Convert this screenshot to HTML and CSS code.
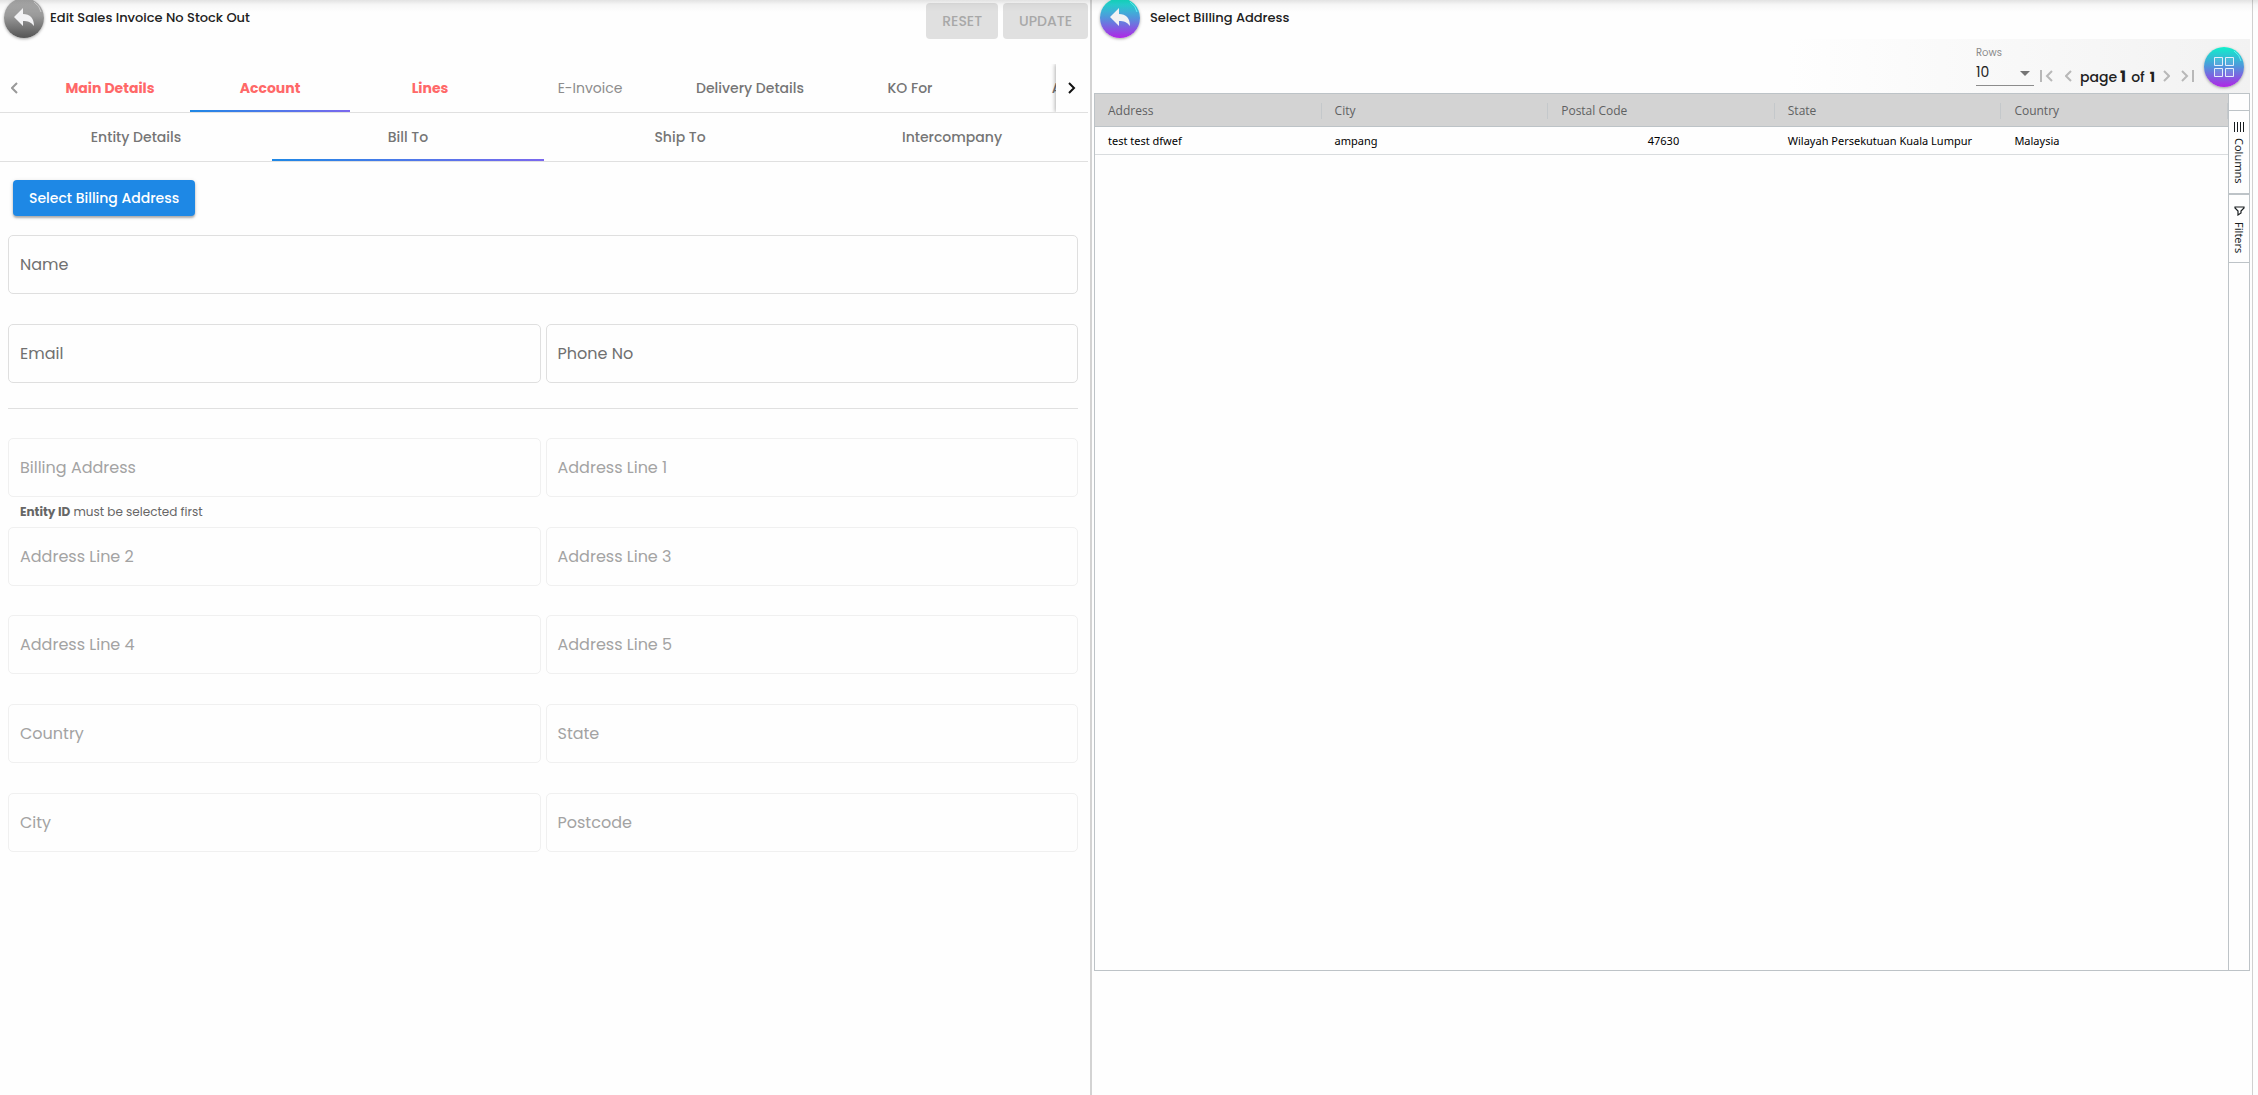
FILE: index.html
```html
<!DOCTYPE html>
<html lang="en">
<head>
<meta charset="utf-8">
<meta name="viewport" content="width=device-width, initial-scale=1">
<title>Edit Sales Invoice No Stock Out</title>
<link rel="stylesheet" href="styles.css">
</head>
<body>
<div class="workspace">
  <main class="pane pane-edit">
    <header class="pane-header">
      <button class="round round-grey" type="button" aria-label="Back">
        <svg width="40" height="40" viewBox="0 0 40 40"><path d="M19 10v6c7 0 11 4 11 12-3-4-6-5-11-5v5l-9-9z" fill="#f2f2f4"/><path d="M30 4q6 4 7 10" fill="none" stroke="#fff" stroke-opacity=".45"/></svg>
      </button>
      <h1 class="pane-title">Edit Sales Invoice No Stock Out</h1>
      <div class="actions">
        <button class="btn btn-disabled" type="button" disabled>RESET</button>
        <button class="btn btn-disabled" type="button" disabled>UPDATE</button>
      </div>
    </header>

    <nav class="tabs" aria-label="Invoice sections">
      <button class="pager pager-prev" type="button" aria-label="Previous tabs"><svg width="8" height="12" viewBox="0 0 8 12"><path d="M6 1L1 6l5 5" fill="none" stroke="#999" stroke-width="2"/></svg></button>
      <div class="tab-strip">
        <button class="tab tab-error" type="button">Main Details</button>
        <button class="tab tab-error tab-active" type="button">Account</button>
        <button class="tab tab-error" type="button">Lines</button>
        <button class="tab tab-light" type="button">E-Invoice</button>
        <button class="tab" type="button">Delivery Details</button>
        <button class="tab" type="button">KO For</button>
        <button class="tab" type="button">ARAP</button>
      </div>
      <button class="pager pager-next" type="button" aria-label="Next tabs"><svg width="8" height="12" viewBox="0 0 8 12"><path d="M1 1l5 5-5 5" fill="none" stroke="#111" stroke-width="2"/></svg></button>
    </nav>

    <nav class="tabs subtabs" aria-label="Account sections">
      <button class="tab" type="button">Entity Details</button>
      <button class="tab tab-active" type="button">Bill To</button>
      <button class="tab" type="button">Ship To</button>
      <button class="tab" type="button">Intercompany</button>
    </nav>

    <form class="bill-form">
      <button class="btn btn-primary" type="button">Select Billing Address</button>
      <div class="fields">
        <div class="field field-wide"><input id="name" type="text"><label for="name">Name</label></div>
        <div class="field"><input id="email" type="email"><label for="email">Email</label></div>
        <div class="field"><input id="phone" type="tel"><label for="phone">Phone No</label></div>
      </div>
      <hr class="rule">
      <div class="fields fields-address">
        <div class="field"><input id="billing" type="text" disabled><label for="billing">Billing Address</label></div>
        <div class="field"><input id="line1" type="text" disabled><label for="line1">Address Line 1</label></div>
        <p class="hint"><strong>Entity ID</strong> must be selected first</p>
        <div class="field"><input id="line2" type="text" disabled><label for="line2">Address Line 2</label></div>
        <div class="field"><input id="line3" type="text" disabled><label for="line3">Address Line 3</label></div>
      </div>
      <div class="fields fields-more">
        <div class="field"><input id="line4" type="text" disabled><label for="line4">Address Line 4</label></div>
        <div class="field"><input id="line5" type="text" disabled><label for="line5">Address Line 5</label></div>
        <div class="field"><input id="country" type="text" disabled><label for="country">Country</label></div>
        <div class="field"><input id="state" type="text" disabled><label for="state">State</label></div>
        <div class="field"><input id="city" type="text" disabled><label for="city">City</label></div>
        <div class="field"><input id="postcode" type="text" disabled><label for="postcode">Postcode</label></div>
      </div>
    </form>
  </main>

  <aside class="pane pane-select">
    <header class="pane-header">
      <button class="round round-color" type="button" aria-label="Back">
        <svg width="40" height="40" viewBox="0 0 40 40"><path d="M19 10v6c7 0 11 4 11 12-3-4-6-5-11-5v5l-9-9z" fill="#f2f2f4"/><path d="M30 4q6 4 7 10" fill="none" stroke="#7ff" stroke-opacity=".7"/></svg>
      </button>
      <h2 class="pane-title">Select Billing Address</h2>
    </header>

    <div class="toolbar">
      <div class="rows">
        <label for="rows">Rows</label>
        <div class="rows-select">
          <select id="rows"><option>10</option><option>25</option><option>50</option></select>
          <svg width="10" height="5" viewBox="0 0 10 5"><path d="M0 0h10L5 5z" fill="#757575"/></svg>
        </div>
      </div>
      <div class="paging">
        <button class="page-btn" type="button" aria-label="First page"><svg width="14" height="12" viewBox="0 0 14 12"><path d="M1 0v12M12 1L7 6l5 5" fill="none" stroke="#b8b8b8" stroke-width="2"/></svg></button>
        <button class="page-btn" type="button" aria-label="Previous page"><svg width="8" height="12" viewBox="0 0 8 12"><path d="M6 1L1 6l5 5" fill="none" stroke="#b8b8b8" stroke-width="2"/></svg></button>
        <span class="page-text">page<b class="page-now">1</b><span>of</span><b>1</b></span>
        <button class="page-btn" type="button" aria-label="Next page"><svg width="8" height="12" viewBox="0 0 8 12"><path d="M2 1l5 5-5 5" fill="none" stroke="#b8b8b8" stroke-width="2"/></svg></button>
        <button class="page-btn" type="button" aria-label="Last page"><svg width="14" height="12" viewBox="0 0 14 12"><path d="M12 0v12M1 1l5 5-5 5" fill="none" stroke="#b8b8b8" stroke-width="2"/></svg></button>
      </div>
      <button class="round round-color" type="button" aria-label="Grid layout">
        <svg width="40" height="40" viewBox="0 0 40 40"><path d="M10.500 10.500h8v8h-8zM21.500 10.500h8v8h-8zM10.500 21.500h8v8h-8zM21.500 21.500h8v8h-8z" fill="#fff" fill-opacity=".08" stroke="#e4eefa"/><path d="M30 4q6 4 7 10" fill="none" stroke="#7ff" stroke-opacity=".7"/></svg>
      </button>
    </div>

    <div class="grid">
      <div class="grid-body">
        <table class="data">
          <thead><tr><th><span>Address</span></th><th><span>City</span></th><th><span>Postal Code</span></th><th><span>State</span></th><th><span>Country</span></th></tr></thead>
          <tbody><tr><td>test test dfwef</td><td>ampang</td><td><span class="number">47630</span></td><td>Wilayah Persekutuan Kuala Lumpur</td><td>Malaysia</td></tr></tbody>
        </table>
      </div>
      <div class="side-bar">
        <button class="side-btn" type="button"><svg width="11" height="10" viewBox="0 0 11 10"><path d="M.5 0v10M3.500 0v10M6.500 0v10M9.500 0v10" stroke="#181d1f" fill="none"/></svg><span>Columns</span></button>
        <button class="side-btn" type="button"><svg width="11" height="10" viewBox="0 0 11 10"><path d="M1 1h9v1L7 5v2L4 9V5L1 2z" fill="none" stroke="#181d1f" stroke-width="1.2"/></svg><span>Filters</span></button>
      </div>
    </div>
  </aside>
</div>
</body>
</html>
```
FILE: styles.css
```css
* { box-sizing: border-box; }

body {
  margin: 0;
  background: #fefefe;
  color: #212121;
  font-family: Poppins, Inter, sans-serif;
  font-size: 14px;
}

/* shadow cast by the application bar above the workspace */
body::before {
  content: "";
  position: absolute;
  inset: 0 0 auto;
  height: 12px;
  background: linear-gradient(rgba(0, 0, 0, .11), rgba(0, 0, 0, .03) 40%, transparent);
  pointer-events: none;
}

button, input, select { font: inherit; color: inherit; }
button { border: 0; padding: 0; background: none; cursor: pointer; }
svg { display: block; flex: none; }

.workspace {
  display: grid;
  grid-template-columns: minmax(0, 1092fr) minmax(0, 1161fr);
  min-height: 100vh;
  padding-right: 5px;
  overflow: hidden;
}
.pane-edit { border-right: 2px solid #d3d3d3; padding-right: 2px; }
.pane-select { border-right: 1px solid #d0d0d0; padding: 0 2px; }

.pane-header { display: flex; align-items: flex-start; height: 39px; padding-left: 4px; }
.pane-edit .pane-header { height: 64px; }
.pane-title { margin: 0; padding-left: 6px; font-size: 13px; font-weight: 500; line-height: 35px; }
.pane-select .pane-header { padding-left: 6px; }
.pane-select .pane-title { padding-left: 10px; }

.round { width: 40px; height: 40px; flex: none; border-radius: 50%; box-shadow: 0 1px 3px rgba(0, 0, 0, .35); }
.pane-header .round { margin-top: -2px; }
.round-grey { background: linear-gradient(#b0b0b0, #999 45%, #555); }
.round-color { background: linear-gradient(#0ff0cb, #5393dc 50%, #b026e6); }

.actions { display: flex; gap: 5px; margin-left: auto; padding-top: 3px; }
.btn { height: 36px; padding: 0 16px; border-radius: 4px; font-weight: 500; }
.btn-disabled { background: #e0e0e0; color: #a8a8a8; }
.btn-primary {
  margin-left: 5px;
  background: #1e88e5;
  color: #fff;
  box-shadow: 0 2px 2px rgba(0, 0, 0, .25), 0 1px 4px rgba(0, 0, 0, .15);
}

.tabs { display: flex; height: 49px; border-bottom: 1px solid #e0e0e0; }
.tab-strip { display: flex; flex: 1; min-width: 0; overflow: hidden; }
.tab { flex: none; width: 160px; padding-top: 2px; color: #757575; font-weight: 500; border-bottom: 2px solid transparent; }
.tab-light { color: #8c8c8c; font-weight: 400; }
.tab-error { color: #ff6868; font-weight: 700; }
.tab-active { border-image: linear-gradient(90deg, #1e88e5, #7b68ee) 1; }
.subtabs .tab { flex: 1; width: auto; }
.pager { display: grid; place-items: center; flex: none; }
.pager-prev { width: 30px; }
.pager-next { width: 32px; box-shadow: -1px 0 4px rgba(0, 0, 0, .3); clip-path: inset(0 0 0 -6px); background: #fefefe; }

.bill-form { padding: 18px 10px 24px 8px; }
.fields { display: grid; grid-template-columns: repeat(2, minmax(0, 1fr)); gap: 30px 5px; padding-top: 19px; }
.field-wide { grid-column: 1 / -1; }
.fields-address { padding-top: 29px; row-gap: 0; }
.fields-more { padding-top: 29px; }
.field { display: grid; align-items: center; height: 59px; }
.field input, .field label { grid-area: 1 / 1; }
.field input {
  width: 100%;
  height: 100%;
  padding: 0 12px;
  border: 1px solid #dfdfdf;
  border-radius: 5px;
  background: transparent;
}
.field input:disabled { border-color: #f0f0f0; }
.field label { padding-left: 12px; color: #707070; font-size: 16px; pointer-events: none; }
.field input:disabled + label { color: #a3a3a3; }
.hint { grid-column: 1 / -1; margin: 0; padding-left: 12px; color: #666; font-size: 12px; line-height: 30px; }
.rule { height: 1px; margin: 25px 0 0; border: 0; background: #e0e0e0; }

.toolbar {
  display: flex;
  justify-content: flex-end;
  align-items: flex-start;
  height: 54px;
  padding-right: 6px;
  background: linear-gradient(90deg, #fefefe 60%, #f2f2f2);
}
.toolbar .round { margin: 8px 0 0 9px; }
.rows { width: 58px; padding-top: 6px; }
.rows label { display: block; color: #8a8a8a; font-size: 10px; line-height: 16px; }
.rows-select { display: grid; grid-template-columns: 1fr auto; align-items: center; height: 25px; padding-right: 4px; border-bottom: 1px solid #8c8c8c; }
.rows-select select, .rows-select svg { grid-row: 1; }
.rows-select select { grid-column: 1 / -1; width: 100%; height: 20px; padding: 0; margin-bottom: 2px; border: 0; background: none; appearance: none; }
.rows-select svg { grid-column: 2; }
.paging { display: flex; align-items: center; gap: 7px; height: 24px; margin: 25px 0 0 6px; }
.page-btn { height: 24px; display: flex; align-items: center; }
.page-btn:last-child, .page-btn:nth-child(2) { margin-left: 4px; }
.page-text { display: flex; align-items: baseline; gap: 5px; font-weight: 500; }
.page-text b { font-weight: 700; }
.page-text .page-now { margin-left: -2px; font-size: 16px; }

.grid {
  display: flex;
  height: calc(100vh - 217px);
  border: 1px solid #bdc3c7;
  font-family: "Noto Sans", sans-serif;
  font-size: 11px;
}
.grid-body { flex: 1; min-width: 0; }
.data { width: 100%; table-layout: fixed; border-collapse: separate; border-spacing: 0; color: #000; }
.data th, .data td { padding: 0 0 0 13px; text-align: left; white-space: nowrap; overflow: hidden; }
.data th { height: 33px; padding-top: 1px; background: #d3d3d3; border-bottom: 1px solid #bdc3c7; color: #5f6162; font-family: "Open Sans", sans-serif; font-size: 12px; font-weight: 400; }
.data th span { display: block; line-height: 16px; border-right: 1px solid #c4c8cb; }
.data td { height: 28px; border-bottom: 1px solid #d9dcde; }
.number { display: block; width: 118px; text-align: right; }

.side-bar { width: 21px; border-left: 1px solid #bdc3c7; padding-top: 16px; }
.side-btn {
  display: flex;
  flex-direction: column;
  align-items: center;
  gap: 6px;
  width: 100%;
  padding: 11px 0 9px;
  border-top: 1px solid #bdc3c7;
  border-bottom: 1px solid #bdc3c7;
  color: #181d1f;
}
.side-btn span { writing-mode: vertical-rl; line-height: 20px; }
```
